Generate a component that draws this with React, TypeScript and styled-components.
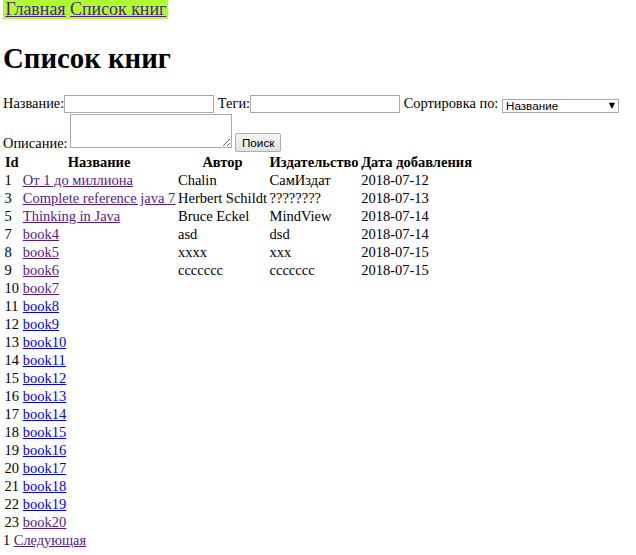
import React from "react";
import styled, { createGlobalStyle } from "styled-components";

const GlobalStyle = createGlobalStyle`
  html, body {
    margin: 0;
    background: #ffffff;
  }
  body {
    padding: 0 3px;
    font-family: "Liberation Serif", "Times New Roman", serif;
    font-size: 14.4px;
    color: #000000;
  }
`;

const Nav = styled.div`
  display: inline-block;
  background-color: #adff2f;
  padding: 0 2px 0 2.5px;
  font-size: 17.9px;
  line-height: 19px;
  vertical-align: top;
`;

const Link = styled.a<{ $visited?: boolean }>`
  color: ${(p) => (p.$visited ? "#551a8b" : "#0000ee")};
  text-decoration: underline;
  cursor: pointer;
`;

const Title = styled.h1`
  font-size: 28.8px;
  font-weight: bold;
  margin: 23px 0 19px;
  line-height: 33px;
`;

const Form = styled.form`
  margin: 0;
  line-height: 19px;
`;

const FormLine = styled.div`
  white-space: nowrap;
`;

const TextInput = styled.input`
  box-sizing: border-box;
  width: 150px;
  height: 18px;
  border: 1px solid #a9a9a9;
  padding: 0 2px;
  margin: 0;
  font-family: "Liberation Sans", Arial, sans-serif;
  font-size: 11.7px;
`;

const SelectWrap = styled.span`
  position: relative;
  display: inline-block;
  vertical-align: -2px;
  line-height: 12px;
`;

const Select = styled.select`
  appearance: none;
  box-sizing: border-box;
  width: 117px;
  height: 14px;
  border: 1px solid #a9a9a9;
  border-radius: 0;
  background: #ffffff;
  padding: 0 0 0 3px;
  margin: 0;
  font-family: "Liberation Sans", Arial, sans-serif;
  font-size: 11.7px;
  line-height: 12px;
  color: #000000;
  display: block;
`;

const Arrow = styled.span`
  position: absolute;
  right: 4px;
  top: 1px;
  font-family: "DejaVu Sans", sans-serif;
  font-size: 8px;
  line-height: 12px;
  color: #000000;
  pointer-events: none;
`;

const TextArea = styled.textarea`
  box-sizing: border-box;
  width: 162px;
  height: 34px;
  border: 1px solid #a9a9a9;
  margin: 1px 0 0 2px;
  padding: 1px;
  font-family: "Liberation Mono", monospace;
  font-size: 12px;
  resize: both;
`;

const Button = styled.button`
  box-sizing: border-box;
  width: 46px;
  height: 19px;
  margin: 0;
  padding: 0;
  border: 1px solid #adadad;
  border-radius: 2px;
  background: linear-gradient(#f4f4f4, #e2e2e2);
  font-family: "Liberation Sans", Arial, sans-serif;
  font-size: 11.7px;
  color: #000000;
  vertical-align: 1px;
`;

const Table = styled.table`
  border-collapse: separate;
  border-spacing: 0;
  margin: 0;
  font-size: 14.5px;
`;

const Th = styled.th<{ $id?: boolean }>`
  padding: ${(p) => (p.$id ? "0 2.5px 0 1.5px" : "0 1.3px")};
  line-height: 18px;
  font-weight: bold;
  text-align: center;
`;

const Td = styled.td<{ $id?: boolean }>`
  padding: ${(p) => (p.$id ? "0 2.5px 0 1.5px" : "0 1.3px")};
  line-height: 18px;
  text-align: left;
  white-space: nowrap;
`;

const Pager = styled.div`
  line-height: 18px;
`;

type Book = {
  id: number;
  title: string;
  author?: string;
  publisher?: string;
  date?: string;
  visited?: boolean;
};

const books: Book[] = [
  { id: 1, title: "От 1 до миллиона", author: "Chalin", publisher: "СамИздат", date: "2018-07-12", visited: true },
  { id: 3, title: "Complete reference java 7", author: "Herbert Schildt", publisher: "????????", date: "2018-07-13", visited: true },
  { id: 5, title: "Thinking in Java", author: "Bruce Eckel", publisher: "MindView", date: "2018-07-14", visited: true },
  { id: 7, title: "book4", author: "asd", publisher: "dsd", date: "2018-07-14", visited: true },
  { id: 8, title: "book5", author: "xxxx", publisher: "xxx", date: "2018-07-15", visited: true },
  { id: 9, title: "book6", author: "ccccccc", publisher: "ccccccc", date: "2018-07-15", visited: true },
  { id: 10, title: "book7", visited: true },
  ...Array.from({ length: 12 }, (_, i) => ({ id: 11 + i, title: `book${8 + i}` })),
  { id: 23, title: "book20", visited: true },
];

export default function App() {
  return (
    <>
      <GlobalStyle />
      <Nav>
        <Link $visited href="#">Главная</Link> <Link $visited href="#">Список книг</Link>
      </Nav>
      <Title>Список книг</Title>
      <Form onSubmit={(e) => e.preventDefault()}>
        <FormLine>
          Название:<TextInput type="text" /> Теги:<TextInput type="text" /> Сортировка по:{" "}
          <SelectWrap>
            <Select defaultValue="name">
              <option value="name">Название</option>
              <option value="date">Дата добавления</option>
            </Select>
            <Arrow>▼</Arrow>
          </SelectWrap>
        </FormLine>
        <FormLine>
          Описание:<TextArea /> <Button type="submit">Поиск</Button>
        </FormLine>
      </Form>
      <Table>
        <thead>
          <tr>
            <Th $id>Id</Th>
            <Th>Название</Th>
            <Th>Автор</Th>
            <Th>Издательство</Th>
            <Th>Дата добавления</Th>
          </tr>
        </thead>
        <tbody>
          {books.map((b) => (
            <tr key={b.id}>
              <Td $id>{b.id}</Td>
              <Td>
                <Link $visited={b.visited} href="#">{b.title}</Link>
              </Td>
              <Td>{b.author}</Td>
              <Td>{b.publisher}</Td>
              <Td>{b.date}</Td>
            </tr>
          ))}
        </tbody>
      </Table>
      <Pager>
        1 <Link $visited href="#">Следующая</Link>
      </Pager>
    </>
  );
}
